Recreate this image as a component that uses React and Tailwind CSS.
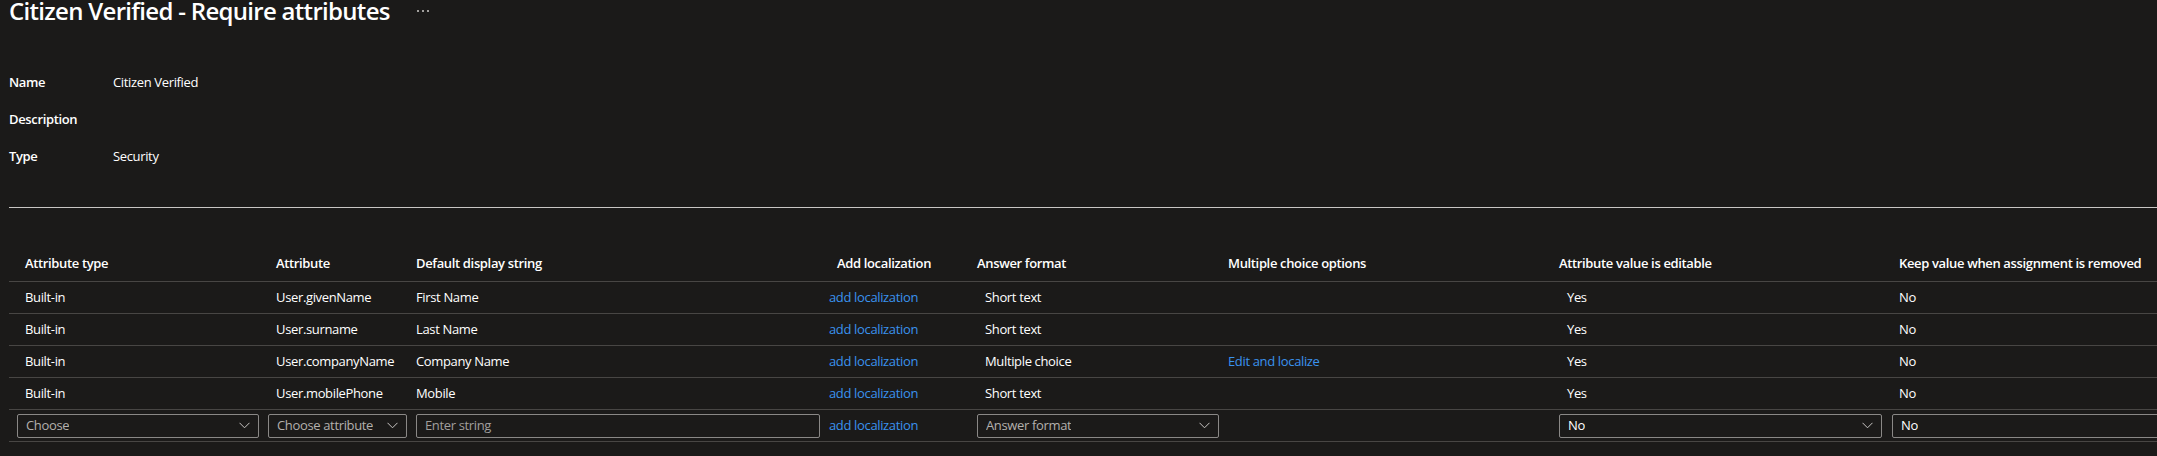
import React from "react";

const COLS = "grid grid-cols-[251px_148px_413px_148px_251px_331px_333px_516px]";

function Chevron() {
  return (
    <svg width="11" height="7" viewBox="0 0 11 7" className="shrink-0 text-[#c8c6c4]">
      <polyline points="0.5,0.8 5.5,5.8 10.5,0.8" fill="none" stroke="currentColor" strokeWidth="1" />
    </svg>
  );
}

function Select({ label, width, placeholder, chevron = true }) {
  return (
    <div
      className={`h-[24px] border border-[#8a8886] rounded-[2px] flex items-center justify-between pl-[8px] pr-[8px] ${width} ${
        placeholder ? "text-[#b3b0ad]" : "text-white"
      }`}
    >
      <span className="truncate">{label}</span>
      {chevron && <Chevron />}
    </div>
  );
}

const rows = [
  ["User.givenName", "First Name", "Short text", false],
  ["User.surname", "Last Name", "Short text", false],
  ["User.companyName", "Company Name", "Multiple choice", true],
  ["User.mobilePhone", "Mobile", "Short text", false],
];

export default function App() {
  return (
    <div
      className="w-[2157px] h-[456px] overflow-hidden bg-[#1b1a19] text-white text-[13px] tracking-[-0.35px]"
      style={{ fontFamily: '"Open Sans", "Noto Sans", sans-serif' }}
    >
      {/* Title */}
      <div className="flex items-center h-[26px] pl-[9px] -mt-[2px]">
        <h1 className="text-[24px] leading-[26px] font-semibold tracking-[-0.7px] whitespace-nowrap">
          Citizen Verified - Require attributes
        </h1>
        <div className="flex items-center gap-[3px] ml-[27px] mb-[1px]">
          <span className="w-[2px] h-[2px] bg-[#a19f9d]" />
          <span className="w-[2px] h-[2px] bg-[#a19f9d]" />
          <span className="w-[2px] h-[2px] bg-[#a19f9d]" />
        </div>
      </div>

      {/* Info */}
      <div className="mt-[40px] pl-[9px]">
        {[
          ["Name", "Citizen Verified"],
          ["Description", ""],
          ["Type", "Security"],
        ].map(([k, v]) => (
          <div key={k} className="flex items-center h-[37px]">
            <div className="w-[104px] font-semibold">{k}</div>
            <div>{v}</div>
          </div>
        ))}
      </div>

      {/* Divider */}
      <div className="mt-[32px] ml-[9px] h-px bg-[#c8c6c4]" />

      {/* Table */}
      <div className="mt-[42px] ml-[9px] w-[2391px]">
        <div className={`${COLS} h-[32px] border-b border-[#484644] items-center pb-[3px] font-semibold`}>
          <div className="pl-[16px]">Attribute type</div>
          <div className="pl-[16px]">Attribute</div>
          <div className="pl-[8px]">Default display string</div>
          <div className="pl-[16px]">Add localization</div>
          <div className="pl-[8px]">Answer format</div>
          <div className="pl-[8px]">Multiple choice options</div>
          <div className="pl-[8px]">Attribute value is editable</div>
          <div className="pl-[15px]">Keep value when assignment is removed</div>
        </div>

        {rows.map(([attr, display, fmt, mc]) => (
          <div key={attr} className={`${COLS} h-[32px] border-b border-[#484644] items-center`}>
            <div className="pl-[16px]">Built-in</div>
            <div className="pl-[16px]">{attr}</div>
            <div className="pl-[8px]">{display}</div>
            <div className="pl-[8px] text-[#3a92ee]">add localization</div>
            <div className="pl-[16px]">{fmt}</div>
            <div className="pl-[8px] text-[#3a92ee]">{mc ? "Edit and localize" : ""}</div>
            <div className="pl-[16px]">Yes</div>
            <div className="pl-[15px]">No</div>
          </div>
        ))}

        <div className={`${COLS} h-[32px] border-b border-[#484644] items-center`}>
          <div className="pl-[8px]">
            <Select label="Choose" width="w-[242px]" placeholder />
          </div>
          <div className="pl-[8px]">
            <Select label="Choose attribute" width="w-[139px]" placeholder />
          </div>
          <div className="pl-[8px]">
            <div className="h-[24px] w-[404px] border border-[#8a8886] rounded-[2px] flex items-center pl-[8px] text-[#a19f9d]">
              Enter string
            </div>
          </div>
          <div className="pl-[8px] text-[#3a92ee]">add localization</div>
          <div className="pl-[8px]">
            <Select label="Answer format" width="w-[242px]" placeholder />
          </div>
          <div />
          <div className="pl-[8px]">
            <Select label="No" width="w-[323px]" />
          </div>
          <div className="pl-[8px]">
            <Select label="No" width="w-[323px]" />
          </div>
        </div>
      </div>
    </div>
  );
}
